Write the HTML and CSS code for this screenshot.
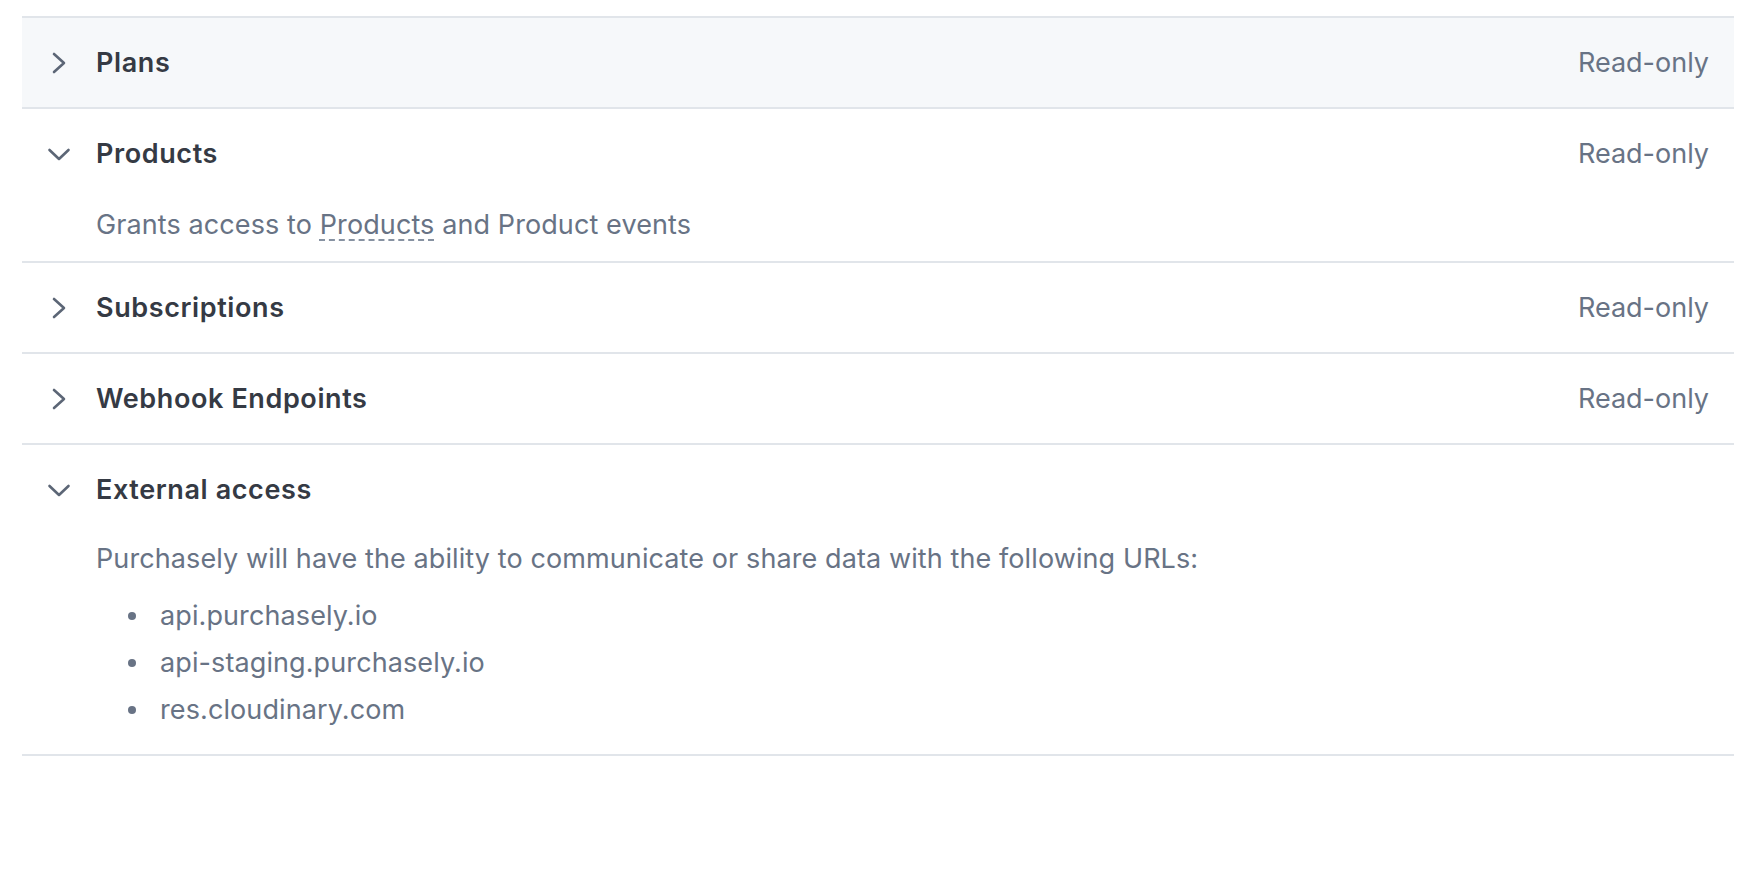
FILE: index.html
```html
<!DOCTYPE html>
<html lang="en">
<head>
    <meta charset="UTF-8">
    <title>Permissions</title>
    <link rel="stylesheet" href="styles.css">
</head>
<body>
    <div class="perm-list">
        <!-- Plans -->
        <div class="perm-row is-hover">
            <div class="perm-head">
                <svg class="chev" viewBox="0 0 26 26"><path d="M8 4l10 9-10 9"/></svg>
                <span class="perm-title">Plans</span>
                <span class="perm-access">Read-only</span>
            </div>
        </div>

        <!-- Products -->
        <div class="perm-row">
            <div class="perm-head">
                <svg class="chev" viewBox="0 0 26 26"><path d="M3.5 9l9.5 9 9.5-9"/></svg>
                <span class="perm-title">Products</span>
                <span class="perm-access">Read-only</span>
            </div>
            <div class="perm-body">
                <p>Grants access to <span class="term">Products</span> and Product events</p>
            </div>
        </div>

        <div class="perm-row">
            <div class="perm-head">
                <svg class="chev" viewBox="0 0 26 26"><path d="M8 4l10 9-10 9"/></svg>
                <span class="perm-title">Subscriptions</span>
                <span class="perm-access">Read-only</span>
            </div>
        </div>

        <div class="perm-row">
            <div class="perm-head">
                <svg class="chev" viewBox="0 0 26 26"><path d="M8 4l10 9-10 9"/></svg>
                <span class="perm-title">Webhook Endpoints</span>
                <span class="perm-access">Read-only</span>
            </div>
        </div>

        <!-- External access -->
        <div class="perm-row">
            <div class="perm-head">
                <svg class="chev" viewBox="0 0 26 26"><path d="M3.5 9l9.5 9 9.5-9"/></svg>
                <span class="perm-title">External access</span>
            </div>
            <div class="perm-body external">
                <p>Purchasely will have the ability to communicate or share data with the following URLs:</p>
                <ul class="url-list">
                    <li>api.purchasely.io</li>
                    <li>api-staging.purchasely.io</li>
                    <li>res.cloudinary.com</li>
                </ul>
            </div>
        </div>
    </div>
</body>
</html>
```

FILE: styles.css
```css
* {
    margin: 0;
    padding: 0;
    box-sizing: border-box;
}

body {
    font-family: Inter, "Noto Sans", sans-serif;
    background: #fff;
    color: #353a44;
    padding: 16px 26px 0 22px;
}

/* List of permission rows */
.perm-list {
    border-top: 2px solid #e1e5ea;
}

.perm-row {
    border-bottom: 2px solid #e1e5ea;
}

.perm-row.is-hover {
    background-color: #f6f8fa;
}

.perm-head {
    display: flex;
    align-items: center;
    height: 89px;
    padding: 0 25px 0 24px;
}

.chev {
    width: 26px;
    height: 26px;
    margin-right: 24px;
    fill: none;
    stroke: #5c6676;
    stroke-width: 2.6;
    stroke-linecap: round;
    stroke-linejoin: round;
}

.perm-title {
    font-size: 27px;
    font-weight: 600;
    letter-spacing: 0.6px;
    flex: 1;
}

.perm-access {
    font-size: 27px;
    color: #687385;
}

/* Expanded content */
.perm-body {
    padding: 10px 0 18px 74px;
    font-size: 27px;
    letter-spacing: 0.1px;
    line-height: 36px;
    color: #687385;
    margin-top: -1px;
}

.perm-body.external {
    padding-top: 8px;
    padding-bottom: 26px;
}

.term {
    text-decoration: underline dashed #8792a2;
    text-decoration-thickness: 2px;
    text-underline-offset: 5px;
}

.url-list {
    list-style: none;
    margin-top: 21px;
}

.url-list li {
    display: flex;
    align-items: center;
    margin-top: 11px;
}

.url-list li:first-child {
    margin-top: 0;
}

.url-list li::before {
    content: "";
    width: 8px;
    height: 8px;
    border-radius: 50%;
    background: #687385;
    margin: 0 24px 0 32px;
}
```
